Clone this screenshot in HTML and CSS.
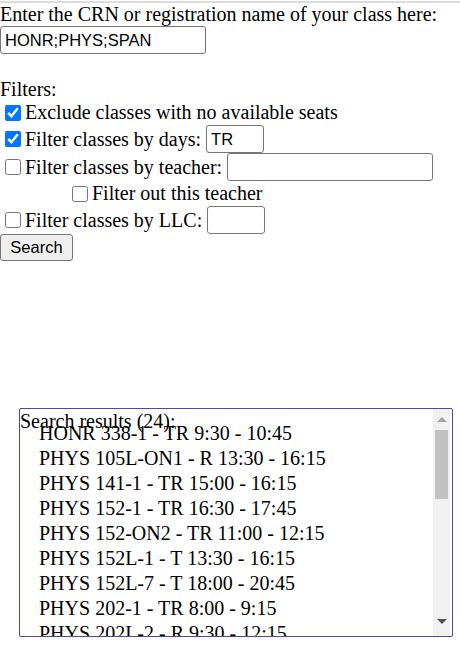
FILE: index.html
```html
<!DOCTYPE html>
<html>
<head>
<meta charset="utf-8">
<link rel="stylesheet" href="styles.css">
</head>
<body>
<div class="topline"></div>
<main class="form">
  <div class="line">Enter the CRN or registration name of your class here:</div>
  <div class="inrow"><input class="txt crn" type="text" value="HONR;PHYS;SPAN"></div>
  <div class="blank"></div>
  <div class="line">Filters:</div>
  <label class="row"><input class="cb" type="checkbox" checked>Exclude classes with no available seats</label>
  <label class="row"><input class="cb" type="checkbox" checked>Filter classes by days: <input class="txt days" type="text" value="TR"></label>
  <label class="row"><input class="cb" type="checkbox">Filter classes by teacher: <input class="txt teacher" type="text"></label>
  <label class="row indent"><input class="cb" type="checkbox">Filter out this teacher</label>
  <label class="row"><input class="cb" type="checkbox">Filter classes by LLC: <input class="txt llc" type="text"></label>
  <div class="btnrow"><button class="btn" type="button">Search</button></div>
</main>
<section class="results">
  <div class="results-title">Search results (24):</div>
  <div class="list-wrap">
    <ul class="list">
      <li>HONR 338-1 - TR 9:30 - 10:45</li>
      <li>PHYS 105L-ON1 - R 13:30 - 16:15</li>
      <li>PHYS 141-1 - TR 15:00 - 16:15</li>
      <li>PHYS 152-1 - TR 16:30 - 17:45</li>
      <li>PHYS 152-ON2 - TR 11:00 - 12:15</li>
      <li>PHYS 152L-1 - T 13:30 - 16:15</li>
      <li>PHYS 152L-7 - T 18:00 - 20:45</li>
      <li>PHYS 202-1 - TR 8:00 - 9:15</li>
      <li>PHYS 202L-2 - R 9:30 - 12:15</li>
    </ul>
    <div class="sbar">
      <div class="arrow up"></div>
      <div class="track"><div class="thumb"></div></div>
      <div class="arrow down"></div>
    </div>
  </div>
</section>
</body>
</html>
```

FILE: styles.css
```css
html, body {
  margin: 0;
  padding: 0;
  background: #fff;
}
body {
  font-family: "Liberation Serif", "Times New Roman", serif;
  font-size: 20px;
  color: #000;
  width: 460px;
  height: 664px;
  overflow: hidden;
}
.topline {
  margin-top: 1px;
  height: 2px;
  background: #dcdcdc;
}
.form {
  display: flex;
  flex-direction: column;
  align-items: flex-start;
}
.line {
  line-height: 22px;
}
.inrow {
  display: flex;
  padding: 1px 0 1px 0;
}
.blank {
  height: 23px;
}
.txt {
  font-family: "Liberation Sans", Arial, sans-serif;
  font-size: 16.5px;
  height: 28px;
  box-sizing: border-box;
  border: 1px solid #767676;
  border-radius: 3px;
  padding: 1px 4px;
  margin: 0;
  color: #000;
  background: #fff;
}
.crn { width: 206px; }
.days { width: 58px; }
.teacher { width: 206px; }
.llc { width: 58px; }
.row {
  display: flex;
  align-items: center;
  line-height: 23px;
  min-height: 25px;
}
.cb {
  width: 16px;
  height: 16px;
  margin: 0 4px 0 5px;
  accent-color: #0075ff;
}
.row .txt {
  margin-left: 5px;
}
.indent {
  padding-left: 67px;
}
.btnrow {
  display: flex;
}
.btn {
  font-family: "Liberation Sans", Arial, sans-serif;
  font-size: 16.5px;
  height: 27px;
  width: 73px;
  padding: 0;
  background: #efefef;
  border: 1px solid #767676;
  border-radius: 3px;
  color: #000;
}
.results {
  position: relative;
  margin: 147px 0 0 19px;
  width: 434px;
  height: 229px;
  box-sizing: border-box;
  border: 1px solid #4a4aa0;
  border-radius: 2px;
  overflow: hidden;
}
.results-title {
  position: absolute;
  left: 0;
  top: 1px;
  line-height: 23px;
}
.list-wrap {
  display: flex;
  height: 100%;
}
.list {
  flex: 1;
  list-style: none;
  margin: 0;
  padding: 12px 0 0 19px;
  overflow: hidden;
}
.list li {
  line-height: 25px;
  white-space: nowrap;
}
.sbar {
  width: 17px;
  margin-right: 2px;
  background: #f1f1f1;
  display: flex;
  flex-direction: column;
}
.arrow {
  height: 21px;
  display: flex;
  align-items: center;
  justify-content: center;
}
.arrow.down {
  height: 20px;
  margin-bottom: 5px;
}
.arrow.up::before {
  content: "";
  border-left: 5px solid transparent;
  border-right: 5px solid transparent;
  border-bottom: 5px solid #a3a3a3;
}
.arrow.down::before {
  content: "";
  border-left: 5px solid transparent;
  border-right: 5px solid transparent;
  border-top: 5px solid #505050;
}
.track {
  flex: 1;
  padding: 0 2px;
}
.thumb {
  height: 69px;
  background: #c1c1c1;
}
```
